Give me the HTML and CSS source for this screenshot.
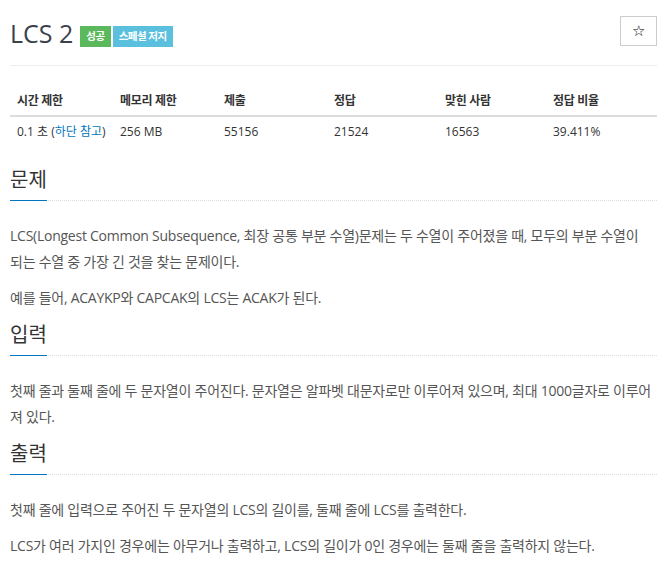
FILE: index.html
```html
<!DOCTYPE html>
<html>

<head>
  <title>LCS 2</title>
  <link rel="stylesheet" href="styles.css">
</head>

<body>
  <div class="container">
    <div class="page-header">
      <h1>
        <span class="title">LCS 2</span>
        <span class="label label-success">성공</span>
        <span class="label label-info">스페셜 저지</span>
      </h1>
      <button type="button" class="star-btn">&#9734;</button>
    </div>

    <table class="info-table">
      <colgroup>
        <col style="width: 103px">
        <col style="width: 104px">
        <col style="width: 110px">
        <col style="width: 111px">
        <col style="width: 108px">
        <col>
      </colgroup>
      <thead>
        <tr>
          <th>시간 제한</th>
          <th>메모리 제한</th>
          <th>제출</th>
          <th>정답</th>
          <th>맞힌 사람</th>
          <th>정답 비율</th>
        </tr>
      </thead>
      <tbody>
        <tr>
          <td>0.1 초 (<a href="#">하단 참고</a>)</td>
          <td>256 MB</td>
          <td>55156</td>
          <td>21524</td>
          <td>16563</td>
          <td>39.411%</td>
        </tr>
      </tbody>
    </table>

    <section class="problem-section">
      <div class="headline">
        <h2><span>문제</span></h2>
      </div>
      <div class="problem-text">
        <p class="keep-all">LCS(Longest Common Subsequence, 최장 공통 부분 수열)문제는 두 수열이 주어졌을 때, 모두의 부분 수열이 되는 수열 중 가장 긴 것을 찾는 문제이다.</p>
        <p>예를 들어, ACAYKP와 CAPCAK의 LCS는 ACAK가 된다.</p>
      </div>
    </section>

    <section class="problem-section">
      <div class="headline">
        <h2><span>입력</span></h2>
      </div>
      <div class="problem-text">
        <p>첫째 줄과 둘째 줄에 두 문자열이 주어진다. 문자열은 알파벳 대문자로만 이루어져 있으며, 최대 1000글자로 이루어져 있다.</p>
      </div>
    </section>

    <section class="problem-section">
      <div class="headline">
        <h2><span>출력</span></h2>
      </div>
      <div class="problem-text">
        <p>첫째 줄에 입력으로 주어진 두 문자열의 LCS의 길이를, 둘째 줄에 LCS를 출력한다.</p>
        <p>LCS가 여러 가지인 경우에는 아무거나 출력하고, LCS의 길이가 0인 경우에는 둘째 줄을 출력하지 않는다.</p>
      </div>
    </section>
  </div>
</body>

</html>
```

FILE: styles.css
```css
body {
  font-family: "Open Sans", "Noto Sans CJK KR", sans-serif;
  background-color: #fff;
  color: #555;
  margin: 0;
  padding: 0;
}

.container {
  padding: 16px 12px 0 10px;
}

.page-header {
  display: flex;
  justify-content: space-between;
  align-items: flex-start;
  padding-bottom: 15px;
  border-bottom: 1px solid #eee;
}

h1 {
  margin: 0;
  font-size: 25px;
  font-weight: 400;
  line-height: 34px;
  color: #3b424c;
  display: flex;
  align-items: center;
}

.title {
  margin-right: 7px;
}

.label {
  display: inline-block;
  font-size: 10.5px;
  font-weight: bold;
  letter-spacing: -0.5px;
  line-height: 21px;
  color: #fff;
  padding: 0 6px;
  margin-right: 2px;
  margin-top: 6px;
}

.label-success {
  background-color: #5cb85c;
}

.label-info {
  background-color: #5bc0de;
}

.star-btn {
  width: 37px;
  height: 30px;
  background-color: #fff;
  border: 1px solid #ccc;
  color: #000;
  font-size: 15px;
  padding: 0;
  cursor: pointer;
}

.info-table {
  width: 100%;
  border-collapse: collapse;
  margin-top: 18px;
  margin-bottom: 20px;
  font-size: 12px;
  line-height: 17px;
}

.info-table th {
  text-align: left;
  font-weight: bold;
  letter-spacing: -0.3px;
  color: #333;
  padding: 8px 7px 6px;
  border-bottom: 2px solid #ddd;
}

.info-table td {
  text-align: left;
  color: #333;
  padding: 6px 7px;
}

.info-table a {
  color: #0076c0;
  text-decoration: none;
}

.headline h2 {
  margin: 0;
  font-size: 20px;
  font-weight: 400;
  color: #333;
  line-height: 28px;
  border-bottom: 1px dotted #ddd;
}

.headline h2 span {
  display: inline-block;
  padding-bottom: 6px;
  border-bottom: 1px solid #0076c0;
  margin-bottom: -1px;
}

.problem-text {
  padding-top: 22px;
}

.problem-text p {
  margin: 0 0 10px;
  font-size: 14px;
  line-height: 26px;
  letter-spacing: -0.25px;
  color: #555;
}

.problem-text .keep-all {
  word-break: keep-all;
}
```
